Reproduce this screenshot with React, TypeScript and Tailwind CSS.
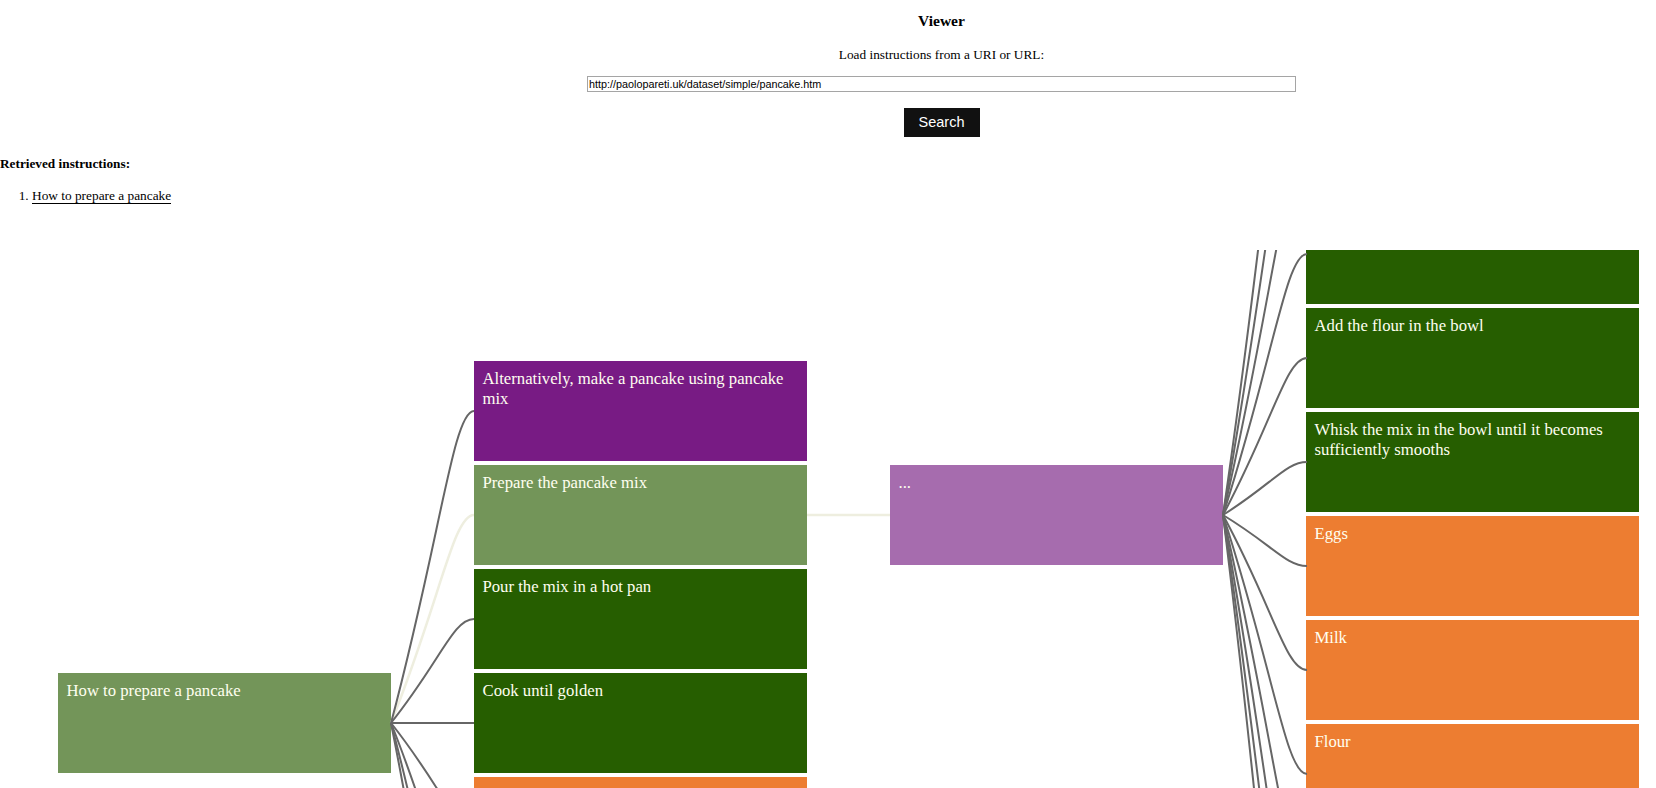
import React from "react";

type Node = { color: string; text: string };

const W = 333;
const H = 100;
const PITCH = 104;
const COLX = [58, 474, 890, 1307];
const DIAG_H = 538;

const C_PURPLE = "#781b84";
const C_LGREEN = "#739559";
const C_DGREEN = "#265e00";
const C_ORANGE = "#ed7d31";
const C_LPURPLE = "#a66cae";

// column tops in diagram-local coordinates
const COL_TOP = [423, 111, 215, -358];

const col1: Node[] = [{ color: C_LGREEN, text: "How to prepare a pancake" }];

const col2: Node[] = [
  { color: C_PURPLE, text: "Alternatively, make a pancake using pancake mix" },
  { color: C_LGREEN, text: "Prepare the pancake mix" },
  { color: C_DGREEN, text: "Pour the mix in a hot pan" },
  { color: C_DGREEN, text: "Cook until golden" },
  { color: C_ORANGE, text: "" },
  { color: C_ORANGE, text: "" },
  { color: C_ORANGE, text: "" },
  { color: C_ORANGE, text: "" },
];

const col3: Node[] = [{ color: C_LPURPLE, text: "..." }];

const col4: Node[] = [
  { color: C_DGREEN, text: "" },
  { color: C_DGREEN, text: "" },
  { color: C_DGREEN, text: "" },
  { color: C_DGREEN, text: "" },
  { color: C_DGREEN, text: "Add the flour in the bowl" },
  { color: C_DGREEN, text: "Whisk the mix in the bowl until it becomes sufficiently smooths" },
  { color: C_ORANGE, text: "Eggs" },
  { color: C_ORANGE, text: "Milk" },
  { color: C_ORANGE, text: "Flour" },
  { color: C_ORANGE, text: "" },
  { color: C_ORANGE, text: "" },
  { color: C_ORANGE, text: "" },
  { color: C_ORANGE, text: "" },
];

function anchor(col: number, idx: number, side: "in" | "out") {
  const x = side === "out" ? COLX[col] + W : COLX[col];
  const y = COL_TOP[col] + idx * PITCH + H / 2;
  return { x, y };
}

function link(pc: number, pi: number, cc: number, ci: number): string {
  const s = anchor(pc, pi, "out");
  const t = anchor(cc, ci, "in");
  const dx = t.x - s.x;
  const dy = t.y - s.y;
  const c1x = s.x + 0.6 * dx;
  const c1y = s.y + 0.6 * dy;
  const c2x = t.x - 0.25 * dx;
  const c2y = t.y;
  return `M${s.x},${s.y} C${c1x},${c1y} ${c2x},${c2y} ${t.x},${t.y}`;
}

function Box({ n }: { n: Node }) {
  return (
    <div
      className="h-[100px] w-[333px] shrink-0 px-[8.5px] pt-[8px] text-[16.7px] leading-[20px] text-[#fffff0]"
      style={{ backgroundColor: n.color }}
    >
      {n.text}
    </div>
  );
}

function Column({ nodes, mt }: { nodes: Node[]; mt: string }) {
  return (
    <div className={"flex shrink-0 flex-col gap-[4px] " + mt}>
      {nodes.map((n, i) => (
        <Box key={i} n={n} />
      ))}
    </div>
  );
}

export default function App() {
  const grayLinks: string[] = [];
  col2.forEach((_, i) => {
    if (i !== 1) grayLinks.push(link(0, 0, 1, i));
  });
  col4.forEach((_, i) => grayLinks.push(link(2, 0, 3, i)));
  const lightLinks = [link(0, 0, 1, 1), link(1, 1, 2, 0)];

  return (
    <div
      className="min-h-[788px] w-[1656px] overflow-hidden bg-white text-black"
      style={{ fontFamily: '"Liberation Serif", "Times New Roman", serif' }}
    >
      <div className="h-[250px]">
        <div className="pl-[227px] text-center">
          <h4 className="pt-[12px] text-[15.5px] font-bold leading-[18px]">Viewer</h4>
          <p className="mt-[17px] text-[13.3px] leading-[16px]">Load instructions from a URI or URL:</p>
          <input
            readOnly
            value="http://paolopareti.uk/dataset/simple/pancake.htm"
            className="mx-auto mt-[13px] block h-[16px] w-[709px] border border-[#a5a5a5] px-[1px] text-[10.8px] leading-[14px] text-black outline-none"
            style={{ fontFamily: '"Liberation Sans", Arial, sans-serif' }}
          />
          <button
            className="mx-auto mt-[16px] block h-[29px] w-[76px] bg-[#111111] text-[14.5px] text-white"
            style={{ fontFamily: '"Liberation Sans", Arial, sans-serif' }}
          >
            Search
          </button>
        </div>
        <h5 className="mt-[19px] text-[13.28px] font-bold leading-[16px]">Retrieved instructions:</h5>
        <ol className="mt-[16px] list-decimal pl-[32px] text-[13.33px] leading-[16px]">
          <li>
            <a href="#" className="border-b border-black text-black">
              How to prepare a pancake
            </a>
          </li>
        </ol>
      </div>
      <div className="relative h-[538px] overflow-hidden">
        <div className="flex items-start gap-[83px] pl-[58px]">
          <Column nodes={col1} mt="mt-[423px]" />
          <Column nodes={col2} mt="mt-[111px]" />
          <Column nodes={col3} mt="mt-[215px]" />
          <Column nodes={col4} mt="-mt-[358px]" />
        </div>
        <svg className="pointer-events-none absolute inset-0" width={1656} height={DIAG_H}>
          {lightLinks.map((d, i) => (
            <path key={"l" + i} d={d} fill="none" stroke="#eeeedf" strokeWidth={2.5} />
          ))}
          {grayLinks.map((d, i) => (
            <path key={"g" + i} d={d} fill="none" stroke="#666666" strokeWidth={2} />
          ))}
        </svg>
      </div>
    </div>
  );
}
